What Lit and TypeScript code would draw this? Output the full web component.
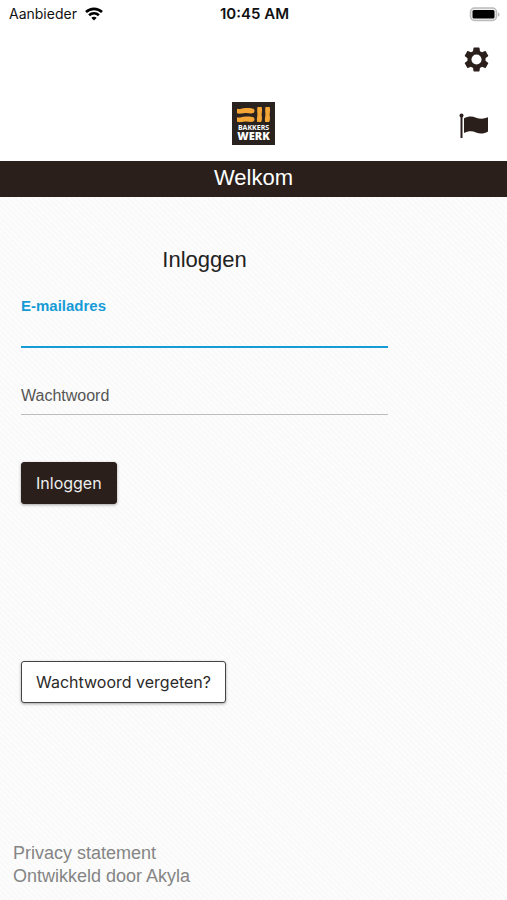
import { LitElement, html, css } from "lit";
import { customElement } from "lit/decorators.js";

@customElement("app-root")
export class AppRoot extends LitElement {
  static styles = css`
    :host {
      display: flex;
      flex-direction: column;
      min-height: 100vh;
      box-sizing: border-box;
      background: #fff;
      color: #2a1f1b;
      font-family: "Liberation Sans", Arial, sans-serif;
    }
    * {
      box-sizing: border-box;
    }
    svg {
      display: block;
    }
    .status {
      display: grid;
      grid-template-columns: 1fr auto 1fr;
      align-items: center;
      height: 28px;
      padding: 0 7px 0 9px;
      font: 400 14px/20px Inter, sans-serif;
      color: #111;
    }
    .carrier {
      display: flex;
      align-items: center;
      gap: 8px;
    }
    .time {
      font-size: 15px;
      font-weight: 600;
    }
    .battery {
      justify-self: end;
    }
    .header {
      display: grid;
      grid-template-columns: 1fr auto 1fr;
      grid-template-rows: 62px 71px;
      align-items: center;
      padding: 0 16px;
    }
    .icon-button {
      grid-column: 3;
      justify-self: end;
      border: 0;
      padding: 0;
      background: none;
      color: #2a1f1b;
    }
    .logo {
      grid-column: 2;
      grid-row: 2;
      align-self: start;
      margin-top: 12px;
    }
    .flag {
      grid-row: 2;
    }
    .banner {
      height: 36px;
      background: #2a1f1b;
      color: #fff;
      text-align: center;
      font-size: 22px;
      line-height: 34px;
    }
    .page {
      flex: 1;
      display: flex;
      flex-direction: column;
      background: repeating-linear-gradient(45deg, #fcfcfc 0, #fcfcfc 2px, #f7f7f7 3px, #fcfcfc 4px);
    }
    .form {
      display: flex;
      flex-direction: column;
      align-items: flex-start;
      margin: 49px 119px 0 21px;
    }
    h1 {
      align-self: stretch;
      margin: 0 0 22px;
      text-align: center;
      font-weight: 400;
      font-size: 22px;
      line-height: 28px;
      color: #222;
    }
    .field {
      align-self: stretch;
      display: grid;
      border-bottom: 1px solid #bdbdbd;
    }
    .field label {
      grid-area: 1 / 1;
      align-self: start;
      font-size: 16px;
      line-height: 20px;
      color: #555;
    }
    .field input {
      grid-area: 1 / 1;
      width: 100%;
      height: 28px;
      border: 0;
      outline: 0;
      padding: 0;
      background: none;
      font: inherit;
      font-size: 16px;
    }
    .field.active {
      height: 52px;
      margin-bottom: 38px;
      border-bottom: 2px solid #169bd7;
    }
    .field.active label {
      font-size: 15px;
      font-weight: 700;
      color: #169bd7;
    }
    .field.active input {
      align-self: end;
    }
    .button {
      height: 42px;
      padding: 0 14px;
      border: 1px solid #2a1f1b;
      border-radius: 3px;
      font: 400 16px/20px Inter, sans-serif;
      box-shadow: 0 1px 3px rgba(0, 0, 0, 0.35);
    }
    .primary {
      margin-top: 47px;
      background: #2a1f1b;
      color: #eee;
    }
    .secondary {
      margin-top: 157px;
      background: #fff;
      color: #2c2a29;
      border-color: #444;
    }
    .footer {
      display: flex;
      flex-direction: column;
      align-items: flex-start;
      margin-top: auto;
      padding: 24px 13px 12px;
      font-size: 18px;
      line-height: 23px;
    }
    .footer a {
      color: #858585;
      text-decoration: none;
    }
    .logo-small {
      font: 700 7px "Open Sans", sans-serif;
      fill: #fff;
    }
    .logo-large {
      font: 800 11px "Open Sans", sans-serif;
      fill: #fff;
    }
  `;

  render() {
    return html`
      <div class="status">
        <div class="carrier">
          <span>Aanbieder</span>
          <svg width="18" height="14" viewBox="0 0 18 14" fill="none" stroke="#000" stroke-width="2.6" aria-hidden="true">
            <path d="M1 5C5.500 .8 12.500 .8 17 5M4.100 8.300c2.800-2.700 7-2.700 9.800 0" />
            <path d="M6.300 10.800c1.600-1.400 3.800-1.400 5.400 0L9 13.600z" fill="#000" stroke="none" />
          </svg>
        </div>
        <span class="time">10:45 AM</span>
        <svg class="battery" width="31" height="15" viewBox="0 0 31 15" aria-hidden="true">
          <rect x="1.500" y="1" width="26" height="12.500" rx="4" fill="#eee" stroke="#bbb" stroke-width="1.500" />
          <rect x="3.500" y="3" width="22" height="8.500" rx="1.500" fill="#000" />
          <path d="M29 5.500c2 .6 2 3.400 0 4z" fill="#b5b5b5" />
        </svg>
      </div>

      <header class="header">
        <button class="icon-button" type="button" aria-label="Instellingen">
          <svg width="29" height="29" viewBox="0 0 24 24" fill="currentColor">
            <path d="M19.430 12.980c.04-.32.07-.64.07-.98s-.03-.66-.07-.98l2.110-1.650c.19-.15.24-.42.12-.64l-2-3.460c-.12-.22-.39-.3-.61-.22l-2.490 1c-.52-.4-1.080-.73-1.690-.98l-.38-2.650C14.460 2.180 14.250 2 14 2h-4c-.25 0-.46.18-.49.42l-.38 2.650c-.61.25-1.170.59-1.690.98l-2.490-1c-.23-.09-.49 0-.61.22l-2 3.460c-.13.22-.07.49.12.64l2.110 1.650c-.04.32-.07.65-.07.98s.03.66.07.98l-2.110 1.650c-.19.15-.24.42-.12.64l2 3.460c.12.22.39.3.61.22l2.490-1c.52.4 1.080.73 1.690.98l.38 2.650c.03.24.24.42.49.42h4c.25 0 .46-.18.49-.42l.38-2.650c.61-.25 1.170-.59 1.690-.98l2.490 1c.23.09.49 0 .61-.22l2-3.460c.12-.22.07-.49-.12-.64zM12 16.200a4.200 4.200 0 1 1 0-8.400 4.200 4.200 0 0 1 0 8.400z" />
          </svg>
        </button>
        <svg class="logo" width="43" height="43" viewBox="0 0 43 43" role="img" aria-label="Bakkers Werk">
          <rect width="43" height="43" fill="#2a221e" />
          <g fill="#f3a535">
            <path d="M5 6.800c3 1 5-.8 8.500-.8 3 0 5.500-.3 8 .8 1.500 1 1.300 3.200 0 4.300-3 .8-5-.2-8.500 0-3 .3-5 1.200-8 .2zM5 15.300c3 1 5-.8 8.500-.8 3 0 5.500-.3 8 .8 1.500 1 1.300 3.200 0 4.300-3 .8-5-.2-8.500 0-3 .3-5 1.200-8 .2z" />
            <path d="M25.500 5h4.200c1 4.500-.4 6 .1 9 .4 2.500.2 4-.6 6h-4c-.8-4 .4-5.500.2-8.500-.2-2.500-.4-4 .1-6.500zM33.500 5h4.200c1 4.500-.4 6 .1 9 .4 2.500.2 4-.6 6h-4c-.8-4 .4-5.500.2-8.500-.2-2.500-.4-4 .1-6.500z" />
          </g>
          <text class="logo-small" x="21.500" y="28" text-anchor="middle">BAKKERS</text>
          <text class="logo-large" x="21.500" y="38" text-anchor="middle">WERK</text>
        </svg>
        <button class="icon-button flag" type="button" aria-label="Taal">
          <svg width="32" height="28" viewBox="0 0 32 28" fill="currentColor">
            <circle cx="2.500" cy="3.500" r="2" />
            <path d="M1.500 4h2v22h-2z" />
            <path d="M5 6.300c4-2 8-2.400 12-.6 4 1.600 8 1.400 12-.4v14.200c-4 2.400-8 2.600-12 1-4-1.800-8-1.400-12 .6z" />
          </svg>
        </button>
      </header>

      <div class="banner">Welkom</div>

      <main class="page">
        <form class="form">
          <h1>Inloggen</h1>
          <div class="field active">
            <label for="email">E-mailadres</label>
            <input id="email" type="email" />
          </div>
          <div class="field">
            <label for="password">Wachtwoord</label>
            <input id="password" type="password" />
          </div>
          <button class="button primary" type="button">Inloggen</button>
          <button class="button secondary" type="button">Wachtwoord vergeten?</button>
        </form>
        <footer class="footer">
          <a href="#privacy">Privacy statement</a>
          <a href="#akyla">Ontwikkeld door Akyla</a>
        </footer>
      </main>
    `;
  }
}
